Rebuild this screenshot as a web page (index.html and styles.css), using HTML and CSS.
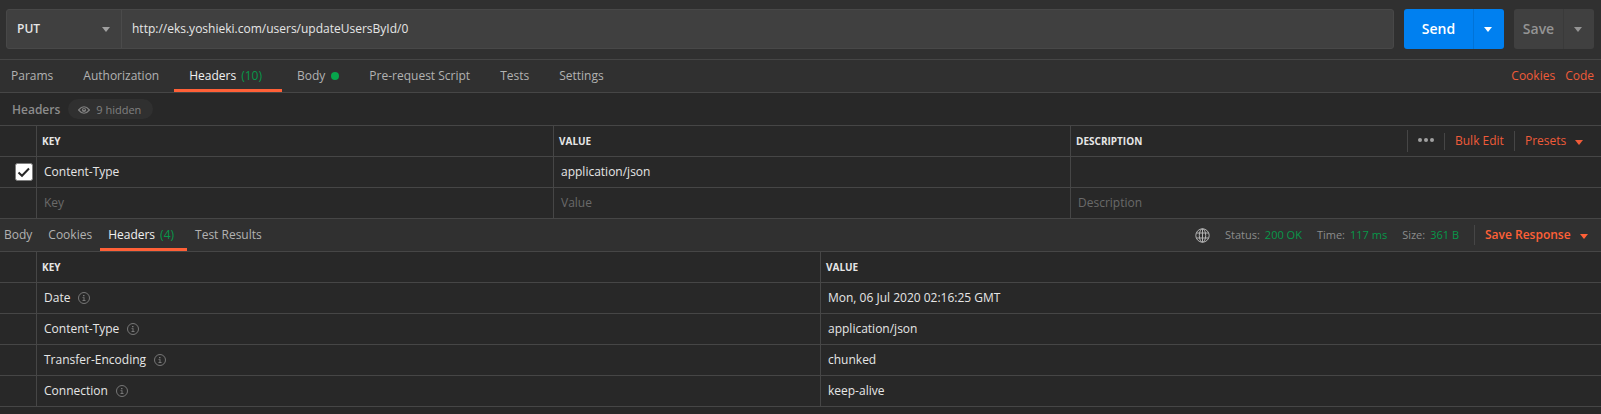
FILE: index.html
```html
<!DOCTYPE html>
<html lang="en">
<head>
<meta charset="utf-8">
<title>Request</title>
<link rel="stylesheet" href="styles.css">
</head>
<body>
<svg class="defs" width="0" height="0">
  <symbol id="caret" viewBox="0 0 8 5"><path d="M0 0h8L4 5z"/></symbol>
  <symbol id="info" viewBox="0 0 12 12"><circle cx="6" cy="6" r="5.5" fill="none" stroke="currentColor"/><path d="M5 3h1.5v1.2H5zM4.5 5.2h2V8h1v.9h-3V8h1V6h-1z"/></symbol>
</svg>
<header class="request-bar">
  <div class="url-group">
    <div class="method"><span>PUT</span><svg class="caret"><use href="#caret"/></svg></div>
    <div class="url">http://eks.yoshieki.com/users/updateUsersById/0</div>
  </div>
  <div class="split send"><span class="main">Send</span><span class="more"><svg class="caret"><use href="#caret"/></svg></span></div>
  <div class="split save"><span class="main">Save</span><span class="more"><svg class="caret"><use href="#caret"/></svg></span></div>
</header>
<nav class="tabs request-tabs">
  <span class="tab">Params</span>
  <span class="tab">Authorization</span>
  <span class="tab active">Headers<span class="count">(10)</span></span>
  <span class="tab">Body<i class="dot"></i></span>
  <span class="tab">Pre-request Script</span>
  <span class="tab">Tests</span>
  <span class="tab">Settings</span>
  <div class="links"><span>Cookies</span><span>Code</span></div>
</nav>
<div class="section-title">
  <span class="label">Headers</span>
  <span class="pill"><svg width="12" height="8" viewBox="0 0 12 8"><path d="M.6 4Q6-2.5 11.4 4 6 10.500.6 4z" fill="none" stroke="currentColor" stroke-width="1.2"/><circle cx="6" cy="4" r="2.1"/><circle class="pupil" cx="6" cy="3.500" r=".8"/></svg>9 hidden</span>
</div>
<div class="grid request-grid">
  <div class="row head">
    <div class="cell"></div><div class="cell">KEY</div><div class="cell">VALUE</div>
    <div class="cell description"><span>DESCRIPTION</span>
      <div class="actions">
        <span class="dots"><svg width="16" height="4" viewBox="0 0 16 4"><circle cx="2" cy="2" r="2"/><circle cx="8" cy="2" r="2"/><circle cx="14" cy="2" r="2"/></svg></span>
        <span class="bulk">Bulk Edit</span>
        <span class="presets">Presets<svg class="caret"><use href="#caret"/></svg></span>
      </div>
    </div>
  </div>
  <div class="row">
    <div class="cell check"><svg width="18" height="18" viewBox="0 0 18 18"><rect x=".5" y=".5" width="17" height="17" rx="2" fill="#fff" stroke="#808080"/><path d="M3.500 9.500 7 12.800 14 5.500" fill="none" stroke="#282828" stroke-width="2"/></svg></div>
    <div class="cell">Content-Type</div><div class="cell">application/json</div><div class="cell"></div>
  </div>
  <div class="row placeholder">
    <div class="cell"></div><div class="cell">Key</div><div class="cell">Value</div><div class="cell">Description</div>
  </div>
</div>
<nav class="tabs response-tabs">
  <span class="tab">Body</span>
  <span class="tab">Cookies</span>
  <span class="tab active">Headers<span class="count">(4)</span></span>
  <span class="tab">Test Results</span>
  <div class="status">
    <svg class="globe" width="15" height="15" viewBox="0 0 15 15"><circle cx="7.500" cy="7.500" r="6.700"/><ellipse cx="7.500" cy="7.500" rx="3.200" ry="6.700"/><path d="M1.500 5h12M1.500 10h12M7.500 1v13"/></svg>
    <span class="stat">Status:<b>200 OK</b></span>
    <span class="stat">Time:<b>117 ms</b></span>
    <span class="stat">Size:<b>361 B</b></span>
    <span class="save-response">Save Response<svg class="caret"><use href="#caret"/></svg></span>
  </div>
</nav>
<div class="grid response-grid">
  <div class="row head"><div class="cell"></div><div class="cell">KEY</div><div class="cell">VALUE</div></div>
  <div class="row"><div class="cell"></div><div class="cell">Date<svg class="info"><use href="#info"/></svg></div><div class="cell">Mon, 06 Jul 2020 02:16:25 GMT</div></div>
  <div class="row"><div class="cell"></div><div class="cell">Content-Type<svg class="info"><use href="#info"/></svg></div><div class="cell">application/json</div></div>
  <div class="row"><div class="cell"></div><div class="cell">Transfer-Encoding<svg class="info"><use href="#info"/></svg></div><div class="cell">chunked</div></div>
  <div class="row"><div class="cell"></div><div class="cell">Connection<svg class="info"><use href="#info"/></svg></div><div class="cell">keep-alive</div></div>
</div>
</body>
</html>
```
FILE: styles.css
```css
* { box-sizing: border-box; }
body {
  margin: 0;
  height: 414px;
  overflow: hidden;
  background: #282828;
  color: #e6e6e6;
  font: 12px/18px "Open Sans", sans-serif;
  white-space: nowrap;
}
svg { display: block; flex: none; fill: currentColor; }
.defs { position: absolute; }
.caret { width: 8px; height: 5px; }

.request-bar {
  display: flex;
  gap: 10px;
  height: 59px;
  padding: 9px 7px 10px 6px;
  background: #303030;
}
.url-group {
  display: flex;
  flex: 1;
  border: 1px solid #484848;
  border-radius: 3px;
  background: #404040;
}
.method {
  display: flex;
  align-items: center;
  justify-content: space-between;
  width: 115px;
  padding: 0 11px 0 10px;
  border-right: 1px solid #4b4b4b;
  font-weight: 600;
}
.method .caret { color: #a0a0a0; }
.url { padding: 10px; }
.split { display: flex; border-radius: 3px; font-size: 14px; font-weight: 600; }
.split span { display: flex; align-items: center; justify-content: center; }
.split .more { width: 31px; padding-right: 2px; border-left: 1px solid #3a3a3a; }
.send { width: 100px; background: #0080f0; color: #fff; }
.send .more { border-color: #0073d8; }
.save { width: 80px; background: #404040; color: #949494; }
.main { flex: 1; }

.tabs {
  display: flex;
  height: 34px;
  border-top: 1px solid #464646;
  border-bottom: 1px solid #464646;
  background: #303030;
  color: #b2b2b2;
}
.tab {
  display: flex;
  align-items: center;
  height: 32px;
  padding: 3px 15px 0;
  border-bottom: 3px solid transparent;
}
.active { border-color: #ff6037; color: #f0f0f0; }
.count { margin: 0 5px; color: #07984a; }
.dot { width: 8px; height: 8px; margin-left: 6px; border-radius: 50%; background: #07a54c; }
.request-tabs { padding-right: 7px; }
.request-tabs .tab:first-child { padding-left: 11px; }
.links { display: flex; align-items: center; gap: 10px; margin-left: auto; color: #ef5b39; }

.section-title { display: flex; align-items: center; gap: 8px; height: 32px; padding-left: 12px; color: #989898; }
.label { padding-top: 1px; font-weight: 600; color: #8c8c8c; }
.pill {
  display: flex;
  align-items: center;
  gap: 6px;
  width: 85px;
  height: 20px;
  padding: 1px 0 0 10px;
  border-radius: 10px;
  background: #303030;
  color: #808080;
  font-size: 11px;
}
.pupil { fill: #303030; }

.row { display: grid; height: 31px; border-top: 1px solid #464646; }
.request-grid .row { grid-template-columns: 36px 517px 517px 1fr; }
.response-grid .row { grid-template-columns: 36px 784px 1fr; }
.response-grid .row:first-child { border-top: 0; height: 30px; }
.response-grid { border-bottom: 1px solid #464646; }
.cell { display: flex; align-items: center; padding-left: 7px; border-left: 1px solid #464646; }
.cell:first-child { border-left: 0; }
.head .cell { padding-left: 5px; font-size: 10px; font-weight: 700; }
.check { padding-left: 15px; }
.placeholder .cell { color: #6a6a6a; }
.info { width: 12px; height: 12px; margin-left: 8px; color: #777; }
.description { justify-content: space-between; }
.actions { display: flex; align-items: center; font-size: 12px; font-weight: 400; color: #ef5b39; }
.actions > span { display: flex; align-items: center; border-left: 1px solid #464646; }
.dots { width: 37px; height: 22px; padding: 0 0 2px 10px; color: #a0a0a0; }
.bulk { width: 70px; height: 17px; padding-left: 10px; }
.presets { width: 87px; height: 20px; padding-left: 10px; }
.presets .caret { margin: 2px 0 0 9px; }

.response-tabs .tab { padding: 3px 8px 0; }
.response-tabs .tab:first-child { padding-left: 4px; }
.status { display: flex; align-items: center; margin-left: auto; font-size: 11px; }
.globe { margin-right: 15px; fill: none; stroke: currentColor; }
.stat { margin-right: 15px; color: #8c8c8c; }
.stat b { margin-left: 5px; color: #07984a; font-weight: 400; }
.save-response { display: flex; align-items: center; width: 127px; height: 20px; padding-left: 10px; border-left: 1px solid #464646; color: #ff6037; font-size: 12px; font-weight: 600; }
.save-response .caret { margin: 2px 0 0 9px; }
```
